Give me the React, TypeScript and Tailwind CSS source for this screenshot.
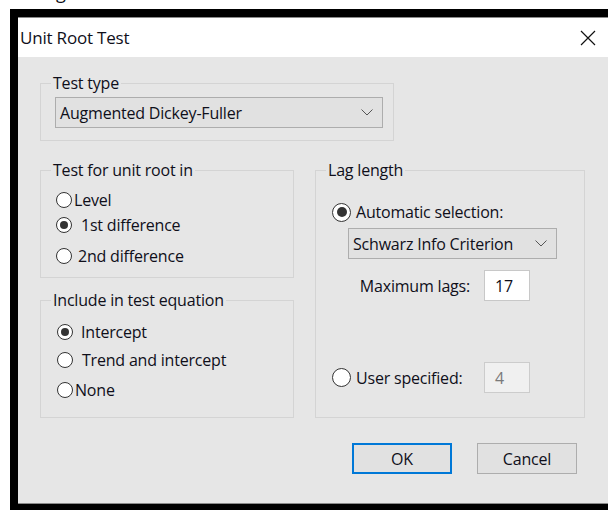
import React from "react";

type RadioProps = { checked?: boolean; large?: boolean };

function Radio({ checked, large }: RadioProps) {
  return (
    <span
      className={
        large
          ? "flex h-[19px] w-[19px] shrink-0 items-center justify-center rounded-full border border-[#333333] bg-white"
          : "flex h-[16px] w-[16px] shrink-0 items-center justify-center rounded-full border border-[#333333] bg-white"
      }
    >
      {checked && (
        <span
          className={
            large
              ? "h-[10px] w-[10px] rounded-full bg-[#333333]"
              : "h-[8px] w-[8px] rounded-full bg-[#333333]"
          }
        />
      )}
    </span>
  );
}

function Chevron() {
  return (
    <svg width="12" height="7" viewBox="0 0 12 7" className="shrink-0">
      <path d="M0.5 0.5 L6 6 L11.5 0.5" fill="none" stroke="#555555" strokeWidth="1" />
    </svg>
  );
}

function Combo({ value, className }: { value: string; className: string }) {
  return (
    <div
      className={
        "flex h-[31px] items-center justify-between border border-[#adadad] bg-[#e1e1e1] pl-[4px] pr-[9px] " +
        className
      }
    >
      <span>{value}</span>
      <Chevron />
    </div>
  );
}

function Legend({ children }: { children: React.ReactNode }) {
  return <legend className="ml-[10px] h-[20px] px-[2px] leading-[20px]">{children}</legend>;
}

export default function App() {
  return (
    <div className="flex h-[510px] w-[608px] flex-col overflow-hidden bg-white text-[16px] tracking-[-0.2px] text-[#0f0f1a] [font-family:'Open_Sans','Noto_Sans',sans-serif]">
      {/* strip of the window behind the dialog */}
      <div className="h-[9px] shrink-0 overflow-hidden pl-[56px]">
        <div className="-mt-[19px] text-[18px] leading-[22px]">g</div>
      </div>

      <div className="flex min-h-0 flex-1 pl-[10px]">
        <div className="flex min-h-0 flex-1 bg-black pb-[6px] pl-[8px] pt-[8px]">
          <div className="flex w-[620px] shrink-0 flex-col border-b border-t border-[#8a8a8a] bg-[#e6e6e6]">
            {/* title bar */}
            <div className="flex h-[39px] shrink-0 items-center justify-between bg-white pl-[2px] pr-[42px]">
              <span className="text-[17px]">Unit Root Test</span>
              <svg width="16" height="16" viewBox="0 0 16 16">
                <path d="M1 1 L15 15 M15 1 L1 15" stroke="#111111" strokeWidth="1.2" />
              </svg>
            </div>

            {/* body */}
            <div className="flex flex-1 flex-col pl-[22px]">
              <fieldset className="mt-[16px] w-[354px] border border-[#d4d4d4] p-0">
                <Legend>Test type</Legend>
                <div className="pb-[12px] pl-[14px]">
                  <Combo value="Augmented Dickey-Fuller" className="mt-[4px] w-[328px]" />
                </div>
              </fieldset>

              <div className="mt-[19px] flex gap-[21px]">
                <div className="flex w-[254px] flex-col gap-[12px]">
                  <fieldset className="border border-[#d4d4d4] p-0">
                    <Legend>Test for unit root in</Legend>
                    <div className="pb-[11px] pl-[15px]">
                      <div className="mt-[10px] flex h-[20px] items-center">
                        <Radio />
                        <span className="ml-[2px]">Level</span>
                      </div>
                      <div className="mt-[5px] flex h-[20px] items-center">
                        <Radio checked />
                        <span className="ml-[9px]">1st difference</span>
                      </div>
                      <div className="mt-[11px] flex h-[20px] items-center">
                        <Radio />
                        <span className="ml-[6px]">2nd difference</span>
                      </div>
                    </div>
                  </fieldset>

                  <fieldset className="border border-[#d4d4d4] p-0">
                    <Legend>Include in test equation</Legend>
                    <div className="pb-[17px] pl-[16px]">
                      <div className="mt-[12px] flex h-[20px] items-center">
                        <Radio checked />
                        <span className="ml-[8px]">Intercept</span>
                      </div>
                      <div className="mt-[8px] flex h-[20px] items-center">
                        <Radio />
                        <span className="ml-[9px]">Trend and intercept</span>
                      </div>
                      <div className="mt-[10px] flex h-[20px] items-center">
                        <Radio />
                        <span className="ml-[2px]">None</span>
                      </div>
                    </div>
                  </fieldset>
                </div>

                <fieldset className="w-[270px] border border-[#d4d4d4] p-0">
                  <Legend>Lag length</Legend>
                  <div className="mt-[22px] flex h-[20px] items-center pl-[16px]">
                    <Radio checked large />
                    <span className="ml-[5px]">Automatic selection:</span>
                  </div>
                  <Combo value="Schwarz Info Criterion" className="ml-[32px] mt-[6px] w-[209px]" />
                  <div className="mt-[11px] flex items-center">
                    <span className="w-[168px] pr-[14px] text-right">Maximum lags:</span>
                    <div className="flex h-[31px] w-[46px] items-center border border-[#c8c8c8] bg-white pl-[10px]">
                      17
                    </div>
                  </div>
                  <div className="mt-[61px] flex items-center">
                    <div className="flex w-[168px] items-center pl-[16px]">
                      <Radio large />
                      <span className="ml-[5px]">User specified:</span>
                    </div>
                    <div className="flex h-[31px] w-[46px] items-center border border-[#cccccc] bg-[#f0f0f0] pl-[10px] text-[#7a7a7a]">
                      4
                    </div>
                  </div>
                </fieldset>
              </div>

              <div className="mt-[25px] flex">
                <button className="ml-[312px] flex h-[31px] w-[100px] items-center justify-center border-2 border-[#0078d7] bg-[#e1e1e1]">
                  OK
                </button>
                <button className="ml-[25px] flex h-[31px] w-[100px] items-center justify-center border border-[#adadad] bg-[#e1e1e1]">
                  Cancel
                </button>
              </div>
            </div>
          </div>
        </div>
      </div>
    </div>
  );
}
